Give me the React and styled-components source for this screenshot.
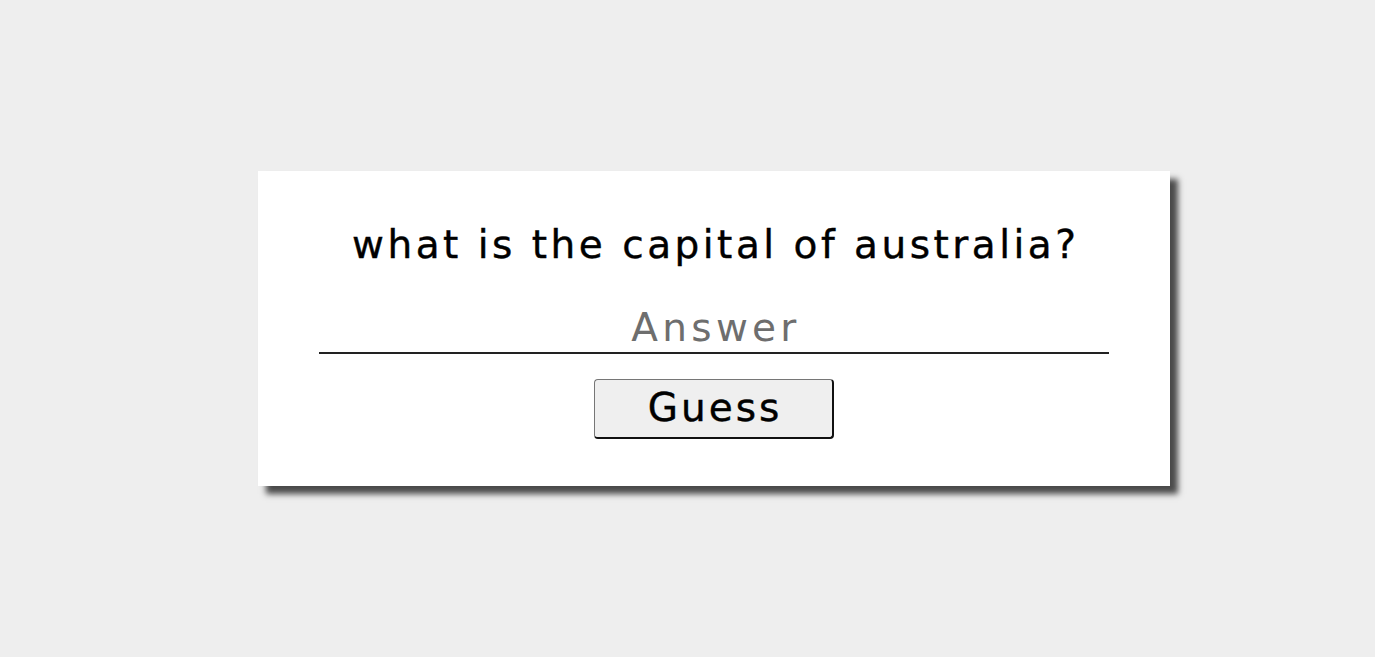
import React from "react";
import styled, { createGlobalStyle } from "styled-components";

const Global = createGlobalStyle`
  html, body { margin: 0; padding: 0; background: #eeeeee; }
  body { font-family: "Comic Sans MS", "DejaVu Sans", sans-serif; }
`;

const Page = styled.div`
  min-height: 657px;
  padding: 171px 0 0 258px;
  box-sizing: border-box;
`;

const Card = styled.div`
  width: 912px;
  height: 315px;
  box-sizing: border-box;
  background: #ffffff;
  box-shadow: 8px 8px 6px #4a4a4a;
  padding: 52px 61px 47px;
  display: flex;
  flex-direction: column;
  align-items: center;
`;

const Question = styled.h2`
  margin: 0;
  height: 44px;
  line-height: 44px;
  font-size: 39px;
  letter-spacing: 3.5px;
  padding-left: 3.5px;
  font-weight: normal;
  -webkit-text-stroke: 0.4px #000;
  color: #000;
  white-space: nowrap;
`;

const AnswerInput = styled.input`
  margin-top: 41px;
  width: 790px;
  height: 46px;
  box-sizing: border-box;
  border: none;
  border-bottom: 2px solid #222;
  outline: none;
  background: transparent;
  text-align: center;
  font-family: inherit;
  font-size: 39px;
  letter-spacing: 4.3px;
  padding: 0 0 6px 4px;
  color: #000;
  &::placeholder { color: #6e6e6e; }
`;

const GuessButton = styled.button`
  margin-top: 25px;
  width: 240px;
  height: 60px;
  box-sizing: border-box;
  background: #efefef;
  border: 1px solid #767676;
  border-right: 2px solid #111;
  border-bottom: 2px solid #111;
  border-radius: 4px;
  font-family: inherit;
  font-size: 39px;
  letter-spacing: 3px;
  -webkit-text-stroke: 0.4px #000;
  color: #000;
  padding: 0 0 2px 3px;
  cursor: pointer;
`;

export default function App() {
  return (
    <>
      <Global />
      <Page>
        <Card>
          <Question>what is the capital of australia?</Question>
          <AnswerInput placeholder="Answer" />
          <GuessButton>Guess</GuessButton>
        </Card>
      </Page>
    </>
  );
}
